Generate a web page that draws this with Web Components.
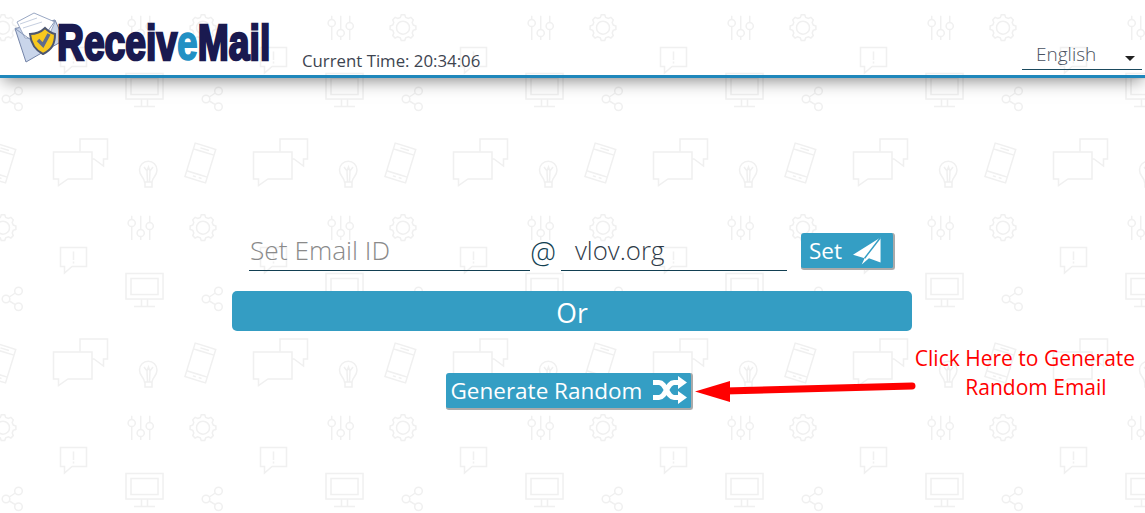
<!DOCTYPE html>
<html lang="en">
<head>
<meta charset="utf-8">
<title>ReceiveMail</title>
<style>
    html, body { margin: 0; height: 100%; }
    body { font-family: "Open Sans", "Noto Sans", sans-serif; color: #333; background: #fff; overflow: hidden; }
</style>
</head>
<body>
<rm-page>
    <rm-header slot="header">
        <rm-logo slot="logo"></rm-logo>
        <rm-clock slot="clock" time="20:34:06"></rm-clock>
        <rm-lang slot="lang">English</rm-lang>
    </rm-header>
    <rm-email-form domain="vlov.org" placeholder="Set Email ID"></rm-email-form>
    <rm-callout></rm-callout>
</rm-page>

<script>
(function () {
    // builds the faint icon wallpaper, one 200x200 tile
    let gearPath = function (cx, cy) {
        let d = "";
        let teeth = 8;
        for (let i = 0; i < teeth; i++) {
            let a = (i / teeth) * Math.PI * 2;
            let pts = [[-0.26, 10.6], [-0.13, 13], [0.13, 13], [0.26, 10.6]];
            pts.forEach(function (p, n) {
                let x = cx + Math.cos(a + p[0]) * p[1];
                let y = cy + Math.sin(a + p[0]) * p[1];
                d += (i === 0 && n === 0 ? "M" : "L") + x.toFixed(1) + " " + y.toFixed(1);
            });
        }
        return d + "Z";
    };
    let phone = `<g transform="rotate(17 200.4 163)"><rect x="189.6" y="145.5" width="21.5" height="35"/><path d="M189.6 151.5h21.5M189.6 174.5h21.5M196 148.5h9M197 177.5h3M203 177.5h3"/></g>`;
    let gear = `<path d="${gearPath(3, 27.7)}"/><circle cx="3" cy="27.7" r="6.5"/>`;
    let share = `<circle cx="18.5" cy="91" r="3.8"/><circle cx="6" cy="99" r="3.8"/><circle cx="18.5" cy="106.7" r="3.8"/><path d="M9.3 97L15.3 93M9.3 101L15.3 104.7"/>`;
    let tile = `<svg xmlns="http://www.w3.org/2000/svg" width="200" height="200" viewBox="0 0 200 200"><g fill="none" stroke="#f0f0f0" stroke-width="1.5">
        <path d="M53.5 152H92V179H68L58.5 185.5V179H53.5Z"/>
        <path d="M80 152V139H107.5V159H103.5V166L94 159H92"/>
        <path d="M144.5 182C144 177 139.5 176 139.5 170A8.7 8.7 0 0 1 157 170C157 176 152.5 177 152 182ZM145 182V187H152V182M144 167L147 171L148.5 167L150 171L153 167M147 171L147.5 182M150 171L149.5 182"/>
        ${phone}<g transform="translate(-200 0)">${phone}</g>
        ${gear}<g transform="translate(200 0)">${gear}</g>
        <path d="M131.7 15.7V40M140.7 15.7V40M149.7 15.7V40"/>
        <g fill="#fff"><circle cx="131.7" cy="23" r="3.6"/><circle cx="140.7" cy="33" r="3.6"/><circle cx="149.7" cy="26" r="3.6"/></g>
        <path d="M60.5 47.5H86.5V66.5H72L64.5 73V66.5H60.5Z"/>
        <path d="M73.5 51.5V60M73.5 61.5V63.5"/>
        <rect x="126" y="73.5" width="37" height="25.5"/><rect x="131" y="78.5" width="27" height="16"/>
        <path d="M141.5 99V106M147.5 99V106M134 106.5H155"/>
        ${share}
    </g></svg>`;
    let tileUrl = "data:image/svg+xml," + encodeURIComponent(tile);

    class RmPage extends HTMLElement {
        connectedCallback() {
            this.attachShadow({ mode: "open" });
            this.shadowRoot.innerHTML = `
                <style>
                    :host { display: block; position: relative; height: 513px; overflow: hidden;
                        background-image: url("${tileUrl}"); background-repeat: repeat; }
                    main { display: flex; justify-content: center; padding: 155px 1px 0 0; }
                </style>
                <slot name="header"></slot>
                <main><slot></slot></main>`;
        }
    }

    class RmHeader extends HTMLElement {
        connectedCallback() {
            this.attachShadow({ mode: "open" });
            this.shadowRoot.innerHTML = `
                <style>
                    :host { display: flex; align-items: flex-end; box-sizing: content-box; height: 75px;
                        padding: 0 3px 0 15px; border-bottom: 3px solid #1f87bb;
                        box-shadow: 0 5px 16px -3px rgba(0,0,0,.5); }
                    .time { margin-left: 29px; }
                    .lang { margin-left: auto; }
                </style>
                <slot name="logo"></slot>
                <div class="time"><slot name="clock"></slot></div>
                <div class="lang"><slot name="lang"></slot></div>`;
        }
    }

    class RmLogo extends HTMLElement {
        connectedCallback() {
            this.attachShadow({ mode: "open" });
            this.shadowRoot.innerHTML = `
                <style>
                    :host { display: block; width: 258px; height: 64px; align-self: flex-start; margin-top: 11px; }
                    svg { display: block; overflow: visible; }
                    text { font-family: "Liberation Sans", Arial, sans-serif; font-weight: 700; font-size: 50px; }
                </style>
                <svg width="258" height="64" viewBox="15 11 258 64">
                    <path d="M15 28.5L55 20 64 40 26 62Z" fill="#c9d5ea" stroke="#7484a8"/>
                    <path d="M17 22L34 13 55 22 47 40 25 38Z" fill="#fff" stroke="#9aa8c4"/>
                    <path d="M20 24L37 18M23 28L42 22" stroke="#c6cfe0" fill="none"/>
                    <path d="M15 28.5L38 45 55 21" fill="none" stroke="#8797b8"/>
                    <path d="M30 34C37 34 42 31 45 28 48 31 50 33 55 34 55 45 51 50 43 54 35 50 31 44 30 34Z" fill="#f7c81e" stroke="#4d5670" stroke-width="2"/>
                    <path d="M38 40L43 45 49 34" fill="none" stroke="#5e6c8c" stroke-width="3.5"/>
                    <text transform="translate(57 60) scale(.745 1)" fill="#1a1a50" stroke="#1a1a50" stroke-width="2.6">Receiv<tspan fill="#2190c4" stroke="#2190c4" stroke-width="1.6">e</tspan>Mail</text>
                </svg>`;
        }
    }

    class RmClock extends HTMLElement {
        connectedCallback() {
            this.attachShadow({ mode: "open" });
            this.shadowRoot.innerHTML = `
                <style>
                    :host { display: block; font-size: 16.8px; line-height: 20px; color: #3d4450; padding-bottom: 4px; white-space: nowrap; }
                </style>
                Current Time: ${this.getAttribute("time")}`;
        }
    }

    class RmLang extends HTMLElement {
        connectedCallback() {
            this.attachShadow({ mode: "open" });
            this.shadowRoot.innerHTML = `
                <style>
                    :host { display: flex; align-items: center; box-sizing: border-box; width: 120px; height: 30px;
                        margin-bottom: 5px; padding: 0 7px 2px 14px; border-bottom: 1px solid #1b4a5e;
                        font-size: 19px; font-weight: 300; color: #4a5260; }
                    .label { flex: 1; }
                    .caret { width: 0; height: 0; margin-top: 9px; border: 5px solid transparent; border-top-color: #222; border-bottom-width: 0; }
                </style>
                <span class="label"><slot></slot></span>
                <span class="caret"></span>`;
        }
    }

    class RmField extends HTMLElement {
        connectedCallback() {
            this.attachShadow({ mode: "open" });
            this.shadowRoot.innerHTML = `
                <style>
                    :host { display: block; box-sizing: border-box; height: 38px; border-bottom: 1px solid #123f52;
                        font-size: 25.8px; font-weight: 300; line-height: 35px; white-space: nowrap; color: #2f3a48; }
                    :host([muted]) { color: #8a8a8a; font-size: 26.3px; padding-left: 1px; }
                </style>
                <slot></slot>`;
        }
    }

    class RmButton extends HTMLElement {
        connectedCallback() {
            this.attachShadow({ mode: "open" });
            this.shadowRoot.innerHTML = `
                <style>
                    :host { display: inline-flex; align-items: center; justify-content: space-between; box-sizing: border-box;
                        height: 37px; background: #349ec4; color: #fff; border-radius: 3px;
                        border-right: 2px solid #aaa; border-bottom: 2px solid #aaa; white-space: nowrap; cursor: pointer; font-size: 22px; }
                </style>
                <slot></slot>`;
        }
    }

    class RmEmailForm extends HTMLElement {
        connectedCallback() {
            let domain = this.getAttribute("domain");
            let placeholder = this.getAttribute("placeholder");
            this.attachShadow({ mode: "open" });
            this.shadowRoot.innerHTML = `
                <style>
                    :host { display: flex; flex-direction: column; align-items: center; width: 680px; }
                    .row { display: flex; align-items: flex-start; align-self: stretch; padding-left: 17px; }
                    .id { width: 281px; }
                    .at { width: 31px; text-align: center; font-size: 29px; font-weight: 300; color: #123f52; line-height: 37px; box-sizing: border-box; padding-right: 5px; }
                    .domain { width: 226px; padding-left: 14px; }
                    .set { width: 94px; margin-left: 14px; padding: 0 11px 0 8px; font-size: 22.5px; }
                    .or { align-self: stretch; box-sizing: border-box; height: 40px; margin-top: 20px; background: rgba(48,155,194,.98); color: #fff;
                        border-radius: 5px; text-align: center; font-size: 26.5px; line-height: 45px; }
                    .random { width: 247px; margin: 42px 6px 0 0; padding: 2px 4px 0 5px; font-size: 22.5px; line-height: 1; }
                    svg { display: block; flex: none; }
                </style>
                <div class="row">
                    <rm-field class="id" muted>${placeholder}</rm-field>
                    <span class="at">@</span>
                    <rm-field class="domain">${domain}</rm-field>
                    <rm-button class="set">Set
                        <svg width="29" height="30" viewBox="0 0 30 30">
                            <path d="M28.5 1L0 19 12 22.5 9 29 16.5 22.5 28.5 27Z" fill="#fff"/>
                            <path d="M28.5 1L12 22.5" stroke="#349ec4" stroke-width="1.5"/>
                        </svg>
                    </rm-button>
                </div>
                <div class="or">Or</div>
                <rm-button class="random">Generate Random
                    <svg width="34" height="28" viewBox="0 0 34 28" style="margin-top:-4px">
                        <path d="M0 6.5H6C13 6.5 14 21.5 21 21.5H27M0 21.5H6C13 21.5 14 6.5 21 6.5H27" fill="none" stroke="#fff" stroke-width="5"/>
                        <path d="M25 0L34 6.5 25 13ZM25 15L34 21.5 25 28Z" fill="#fff"/>
                    </svg>
                </rm-button>`;
        }
    }

    class RmCallout extends HTMLElement {
        connectedCallback() {
            this.attachShadow({ mode: "open" });
            this.shadowRoot.innerHTML = `
                <style>
                    :host { display: block; position: absolute; left: 695px; top: 344px; width: 450px; height: 72px; color: #f00; }
                    svg { position: absolute; left: 0; top: 0; }
                    .text { position: absolute; left: 210px; top: 0; width: 240px; text-align: center; font-size: 21px; line-height: 29px; }
                    .second { display: block; padding-left: 22px; }
                </style>
                <svg width="225" height="72" viewBox="0 0 225 72">
                    <path d="M30 47L217 42" stroke="#f00" stroke-width="7" stroke-linecap="round"/>
                    <path d="M0 47.5L35 37V58Z" fill="#f00"/>
                </svg>
                <div class="text">Click Here to Generate<span class="second">Random Email</span></div>`;
        }
    }

    customElements.define("rm-field", RmField);
    customElements.define("rm-button", RmButton);
    customElements.define("rm-logo", RmLogo);
    customElements.define("rm-clock", RmClock);
    customElements.define("rm-lang", RmLang);
    customElements.define("rm-header", RmHeader);
    customElements.define("rm-email-form", RmEmailForm);
    customElements.define("rm-callout", RmCallout);
    customElements.define("rm-page", RmPage);
})();
</script>
</body>
</html>
